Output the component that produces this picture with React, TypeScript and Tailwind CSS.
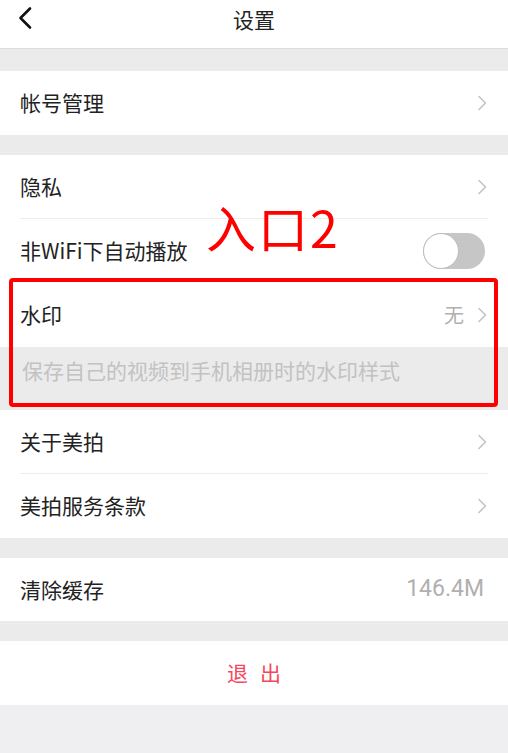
import React, { useState } from 'react';

const font = { fontFamily: '"Noto Sans CJK SC", "Noto Sans", sans-serif' };

const Chevron: React.FC = () => (
  <svg width="10" height="16" viewBox="0 0 10 16" fill="none" className="shrink-0">
    <path d="M2 1.5 L8.5 8 L2 14.5" stroke="#c4c4c6" strokeWidth="1.6" strokeLinecap="round" strokeLinejoin="round" />
  </svg>
);

const Row: React.FC<{ label: string; value?: React.ReactNode; arrow?: boolean; h?: string; children?: React.ReactNode }> = ({
  label,
  value,
  arrow = true,
  h = 'h-16',
  children,
}) => (
  <div className="bg-white">
    <div className={`${h} flex items-center justify-between pl-5 pr-[21px]`}>
      <span className="text-[21px] text-[#222]">{label}</span>
      <div className="flex items-center gap-[13px]">
        {value}
        {children}
        {arrow && <Chevron />}
      </div>
    </div>
  </div>
);

const Toggle: React.FC = () => {
  const [on, setOn] = useState(false);
  return (
    <button
      onClick={() => setOn(!on)}
      className={`relative w-[62px] h-[36px] rounded-full mr-[2px] ${on ? 'bg-[#4cd964]' : 'bg-[#c6c6c6]'}`}
    >
      <span
        className={`absolute top-0 w-[36px] h-[36px] rounded-full bg-white border border-[#bdbdbd] ${on ? 'right-0' : 'left-0'}`}
      />
    </button>
  );
};

export default function App() {
  return (
    <div className="min-h-[753px] bg-[#efeff2] flex flex-col" style={font}>
      {/* header */}
      <div className="h-[49px] bg-white border-b border-[#dcdcdc] flex items-center justify-center relative">
        <svg width="16" height="24" viewBox="0 0 16 24" className="absolute left-[17px] top-[6px]">
          <path d="M13 2.5 L3.5 12 L13 21.5" stroke="#111" strokeWidth="2.6" fill="none" strokeLinecap="round" strokeLinejoin="round" />
        </svg>
        <span className="text-[21px] text-[#222] -mt-[9px]">设置</span>
      </div>

      <div className="h-[22px] bg-[#ebebeb]" />
      <Row label="帐号管理" />
      <div className="h-5 bg-[#ebebeb]" />

      <div className="relative">
        <div className="bg-white">
          <div className="mx-5 border-b border-[#ececec] h-16 flex items-center justify-between">
            <span className="text-[21px] text-[#222]">隐私</span>
            <span className="mr-px">
              <Chevron />
            </span>
          </div>
        </div>
        <Row label="非WiFi下自动播放" arrow={false} h="h-[63px]">
          <Toggle />
        </Row>
        <div className="absolute left-[206px] top-[46px] text-[50px] leading-none text-[#ff0000] tracking-[2px]">入口2</div>
      </div>

      <div className="relative">
        <Row label="水印" value={<span className="text-[20px] text-[#b0b0b0]">无</span>} h="h-[65px]" />
        <div className="h-[63px] bg-[#ebebeb] flex items-center pl-[22px]">
          <span className="text-[21px] text-[#c2c2c2] -mt-[16px]">保存自己的视频到手机相册时的水印样式</span>
        </div>
        <div className="absolute left-[9px] right-[10px] top-[-4px] bottom-[3px] border-4 border-[#ff0000] rounded-[4px]" />
      </div>

      <div className="bg-white">
        <div className="mx-5 border-b border-[#ececec] h-16 flex items-center justify-between">
          <span className="text-[21px] text-[#222]">关于美拍</span>
          <span className="mr-px">
            <Chevron />
          </span>
        </div>
      </div>
      <Row label="美拍服务条款" />
      <div className="h-5 bg-[#ebebeb]" />
      <Row
        label="清除缓存"
        value={<span className="text-[23px] text-[#b0b0b0] mr-[3px]" style={{ fontFamily: 'Roboto, sans-serif' }}>146.4M</span>}
        arrow={false}
        h="h-[63px]"
      />
      <div className="h-5 bg-[#ebebeb]" />
      <div className="h-16 bg-white flex items-center justify-center">
        <span className="text-[21px] text-[#f5475c] tracking-[12px] ml-[12px]">退出</span>
      </div>
      <div className="flex-1" />
    </div>
  );
}
